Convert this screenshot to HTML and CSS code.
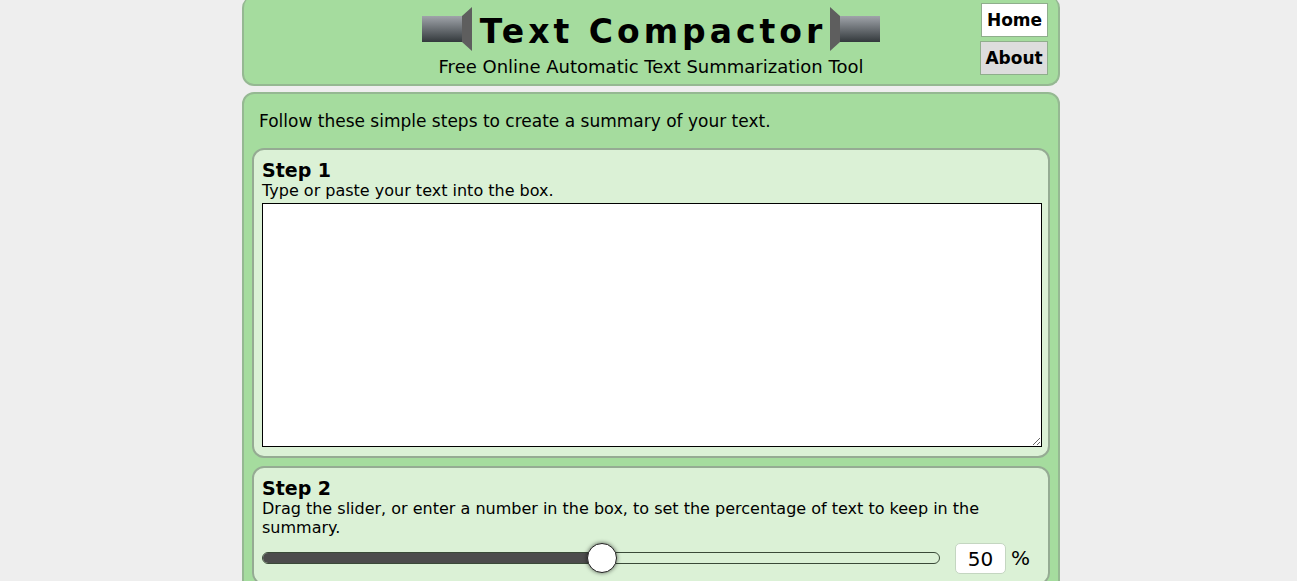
FILE: index.html
```html
<!DOCTYPE html>
<html lang="en">

<head>
    <meta charset="UTF-8">
    <meta name="viewport" content="width=device-width, initial-scale=1.0">
    <title>Text Compactor</title>
    <link rel="stylesheet" href="styles.css">
</head>

<body>
    <div class="page">
        <div class="header">
            <div class="title-row">
                <svg class="horn" width="50" height="44" viewBox="0 0 50 44">
                    <defs>
                        <linearGradient id="hornGrad" x1="0" y1="0" x2="0" y2="1">
                            <stop offset="0" stop-color="#a0a4aa" />
                            <stop offset="1" stop-color="#33393c" />
                        </linearGradient>
                    </defs>
                    <rect x="0" y="9" width="41" height="26" fill="url(#hornGrad)" />
                    <polygon points="40,9 50,0 50,44 40,35" fill="#5e5e5e" />
                </svg>
                <h1>Text Compactor</h1>
                <svg class="horn" width="50" height="44" viewBox="0 0 50 44">
                    <rect x="9" y="9" width="41" height="26" fill="url(#hornGrad)" />
                    <polygon points="10,9 0,0 0,44 10,35" fill="#5e5e5e" />
                </svg>
            </div>
            <div class="tagline">Free Online Automatic Text Summarization Tool</div>
            <div class="nav">
                <a href="#" class="nav-button home">Home</a>
                <a href="#" class="nav-button about">About</a>
            </div>
        </div>

        <div class="main">
            <p class="intro">Follow these simple steps to create a summary of your text.</p>

            <div class="step step-one">
                <h2>Step 1</h2>
                <div class="step-text">Type or paste your text into the box.</div>
                <textarea class="text-box"></textarea>
            </div>

            <div class="step">
                <h2>Step 2</h2>
                <div class="step-text">Drag the slider, or enter a number in the box, to set the percentage of text to keep in the summary.</div>
                <div class="slider-row">
                    <div class="slider">
                        <div class="slider-fill"></div>
                        <div class="slider-thumb"></div>
                    </div>
                    <div class="percent-box">50</div>
                    <span class="percent-sign">%</span>
                </div>
            </div>
        </div>
    </div>
</body>

</html>
```

FILE: styles.css
```css
html,
body {
    height: 581px;
    overflow: hidden;
}

body {
    font-family: "DejaVu Sans", sans-serif;
    margin: 0;
    background-color: #eeeeee;
    color: #000;
}

.page {
    width: 818px;
    margin: 0 auto;
    position: relative;
    left: 2.5px;
}

.header {
    position: relative;
    height: 90px;
    margin-top: -4px;
    margin-bottom: 6px;
    box-sizing: border-box;
    background-color: #a5dc9e;
    border: 2px solid #95b892;
    border-top: none;
    border-radius: 12px;
    text-align: center;
}

.title-row {
    display: flex;
    justify-content: center;
    align-items: flex-start;
    padding-top: 11px;
    height: 44px;
}

.horn {
    flex: none;
}

h1 {
    margin: 0 4px 0 8px;
    font-size: 33px;
    line-height: 50px;
    font-weight: bold;
    letter-spacing: 4px;
    white-space: nowrap;
}

.tagline {
    font-size: 18px;
    line-height: 22px;
    margin-top: 5px;
}

.nav {
    position: absolute;
    top: 7px;
    right: 10px;
    display: flex;
    flex-direction: column;
    align-items: flex-end;
    gap: 4px;
}

.nav-button {
    display: block;
    box-sizing: border-box;
    border: 1px solid #8fae8c;
    color: #000;
    font-size: 17px;
    font-weight: bold;
    text-decoration: none;
    text-align: center;
}

.home {
    width: 67px;
    height: 34px;
    line-height: 32px;
    background-color: #fff;
}

.about {
    width: 68px;
    height: 34px;
    line-height: 32px;
    background-color: #dddddd;
}

.main {
    box-sizing: border-box;
    height: 600px;
    padding: 0 8px;
    background-color: #a5dc9e;
    border: 2px solid #95b892;
    border-radius: 12px;
}

.intro {
    margin: 0;
    padding: 15px 0 15px 7px;
    font-size: 17px;
    line-height: 24px;
}

.step {
    box-sizing: border-box;
    padding: 9px 8px 8px 8px;
    margin-bottom: 8px;
    background-color: #dbf1d6;
    border: 2px solid #95ab93;
    border-radius: 12px;
}

.step-one {
    height: 310px;
}

h2 {
    margin: 0;
    font-size: 19px;
    line-height: 22px;
    font-weight: bold;
}

.step-text {
    font-size: 16px;
    line-height: 19px;
}

.text-box {
    display: block;
    box-sizing: border-box;
    width: 780px;
    height: 244px;
    margin: 3px 0 0 0;
    padding: 2px;
    background-color: #fff;
    border: 1px solid #000;
    border-radius: 0;
}

.slider-row {
    display: flex;
    align-items: center;
    margin-top: 4px;
    height: 34px;
}

.slider {
    position: relative;
    box-sizing: border-box;
    width: 678px;
    height: 12px;
    background-color: #dbf1d6;
    border: 1px solid #3a4a38;
    border-radius: 6px;
}

.slider-fill {
    width: 50%;
    height: 100%;
    background-color: #4c4c4c;
    border-radius: 6px 0 0 6px;
}

.slider-thumb {
    position: absolute;
    top: -10px;
    left: 324px;
    box-sizing: border-box;
    width: 30px;
    height: 30px;
    background-color: #fff;
    border: 1px solid #222;
    border-radius: 50%;
    box-shadow: 0 0 4px rgba(0, 0, 0, 0.6);
}

.percent-box {
    box-sizing: border-box;
    width: 51px;
    height: 31px;
    margin-left: 15px;
    background-color: #fff;
    border: 1px solid #c4d6c1;
    border-radius: 5px;
    font-size: 20px;
    line-height: 31px;
    text-align: center;
}

.percent-sign {
    margin-left: 5px;
    font-size: 20px;
}
```
